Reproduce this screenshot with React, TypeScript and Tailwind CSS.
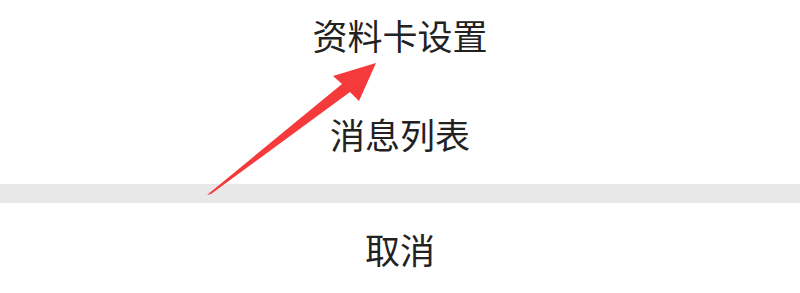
export default function App() {
  const font = { fontFamily: '"Noto Sans CJK SC", "Noto Sans", sans-serif' };
  return (
    <div className="relative w-[800px] h-[293px] overflow-hidden bg-white" style={font}>
      <div className="-mt-[14px] h-[99px] flex items-center justify-center text-[35px] text-[#222]">
        资料卡设置
      </div>
      <div className="h-[99px] flex items-center justify-center text-[35px] text-[#222]">
        消息列表
      </div>
      <div className="h-[19px] bg-[#e8e8e8]" />
      <div className="h-[92px] flex items-center justify-center text-[35px] text-[#222]">
        取消
      </div>
      <svg className="absolute left-0 top-0" width="800" height="293" viewBox="0 0 800 293">
        <polygon
          points="207,195 342,84 333,76 376,63 359,101 350,92 211,194"
          fill="#f43a3a"
        />
      </svg>
    </div>
  );
}
